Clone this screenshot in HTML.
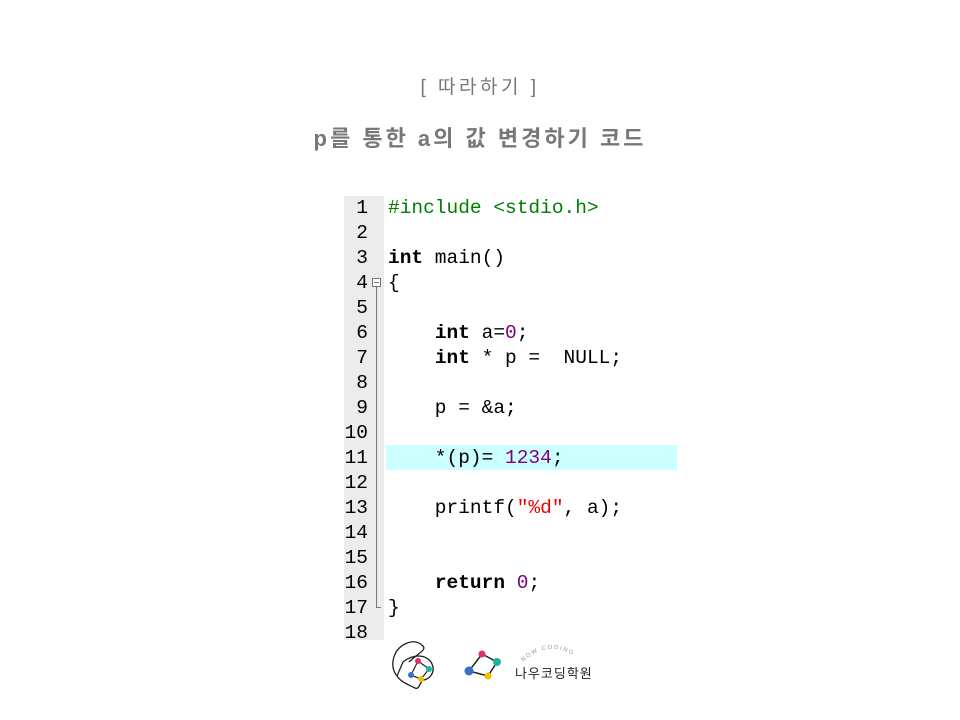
<html><head><style>
body{margin:0;width:960px;height:720px;background:#fff;position:relative;overflow:hidden;font-family:"Liberation Sans","Noto Sans CJK KR",sans-serif}
.t1{position:absolute;top:72px;left:0;width:960px;text-align:center;color:#777;font-size:19px;letter-spacing:3.5px}
.t2{position:absolute;top:121px;left:0;width:960px;text-align:center;color:#777;font-size:22px;font-weight:bold;letter-spacing:3px}
.gut{position:absolute;left:344px;top:196px;width:40px;height:444px;background:#ececec}
.code{position:absolute;left:344px;top:196px;font-family:"Liberation Mono",monospace;font-size:19.5px;line-height:25px;white-space:pre}
.ln{position:absolute;left:0;width:24px;text-align:right;color:#000}
.l{position:absolute;left:388px;color:#000}
.hl{position:absolute;left:386px;top:445px;width:291px;height:25px;background:#ccffff}
b{font-weight:bold}.g{color:#008000}.p{color:#800080}.r{color:#e00}
</style></head><body>
<div class="t1">[ 따라하기 ]</div>
<div class="t2">p를 통한 a의 값 변경하기 코드</div>
<div class="gut"></div>
<div class="hl"></div>
<div style="position:absolute;left:372px;top:278px;width:9px;height:9px;border:1px solid #777;box-sizing:border-box;background:#fff"></div>
<div style="position:absolute;left:374px;top:282px;width:5px;height:1px;background:#777"></div>
<div style="position:absolute;left:376px;top:287px;width:1px;height:321px;background:#777"></div>
<div style="position:absolute;left:376px;top:607px;width:5px;height:1px;background:#777"></div>
<div class="code">
<div class="ln" style="top:0">1</div><div class="ln" style="top:25px">2</div><div class="ln" style="top:50px">3</div><div class="ln" style="top:75px">4</div><div class="ln" style="top:100px">5</div><div class="ln" style="top:125px">6</div><div class="ln" style="top:150px">7</div><div class="ln" style="top:175px">8</div><div class="ln" style="top:200px">9</div><div class="ln" style="top:225px">10</div><div class="ln" style="top:250px">11</div><div class="ln" style="top:275px">12</div><div class="ln" style="top:300px">13</div><div class="ln" style="top:325px">14</div><div class="ln" style="top:350px">15</div><div class="ln" style="top:375px">16</div><div class="ln" style="top:400px">17</div><div class="ln" style="top:425px">18</div>
</div>
<div class="code" style="left:0">
<div class="l g" style="top:0">#include &lt;stdio.h&gt;</div>
<div class="l" style="top:50px"><b>int</b> main()</div>
<div class="l" style="top:75px">{</div>
<div class="l" style="top:125px">    <b>int</b> a=<span class="p">0</span>;</div>
<div class="l" style="top:150px">    <b>int</b> * p =  NULL;</div>
<div class="l" style="top:200px">    p = &amp;a;</div>
<div class="l" style="top:250px">    *(p)= <span class="p">1234</span>;</div>
<div class="l" style="top:300px">    printf(<span class="r">"%d"</span>, a);</div>
<div class="l" style="top:375px">    <b>return</b> <span class="p">0</span>;</div>
<div class="l" style="top:400px">}</div>
</div>
<svg style="position:absolute;left:385px;top:636px" width="230" height="56">
<path d="M12 40 C4 30 8 14 20 8 C28 4 34 6 38 10 C42 14 32 18 24 26 M18 26 C28 18 40 18 46 26 C52 36 44 44 38 44 C34 48 34 54 30 52 C22 48 16 46 12 40 Z" fill="none" stroke="#222" stroke-width="1.3"/>
<path d="M33 25 L44 33 L36 43 L26 39 Z" fill="none" stroke="#222" stroke-width="1.2"/>
<circle cx="33" cy="25" r="3" fill="#e0306a"/><circle cx="44" cy="33" r="3" fill="#20b2a0"/><circle cx="36" cy="43" r="3" fill="#f5c000"/><circle cx="26" cy="39" r="3" fill="#3a6fc8"/>
<path d="M97 18 L112 26 L103 40 L84 35 Z" fill="none" stroke="#222" stroke-width="1.5"/>
<circle cx="97" cy="18" r="3.5" fill="#e0306a"/><circle cx="112" cy="26" r="4" fill="#20b2a0"/><circle cx="103" cy="40" r="3.5" fill="#f5c000"/><circle cx="84" cy="35" r="4.5" fill="#3a6fc8"/>
<path id="arc" d="M138 26 Q166 0 198 26" fill="none"/>
<text font-size="6" fill="#999" letter-spacing="1.5" font-family="Liberation Sans"><textPath href="#arc">NOW CODING</textPath></text>
<text x="130" y="42" font-size="13" fill="#222" letter-spacing="1" font-family="Noto Sans CJK KR,sans-serif">나우코딩학원</text>
</svg>
</body></html>
